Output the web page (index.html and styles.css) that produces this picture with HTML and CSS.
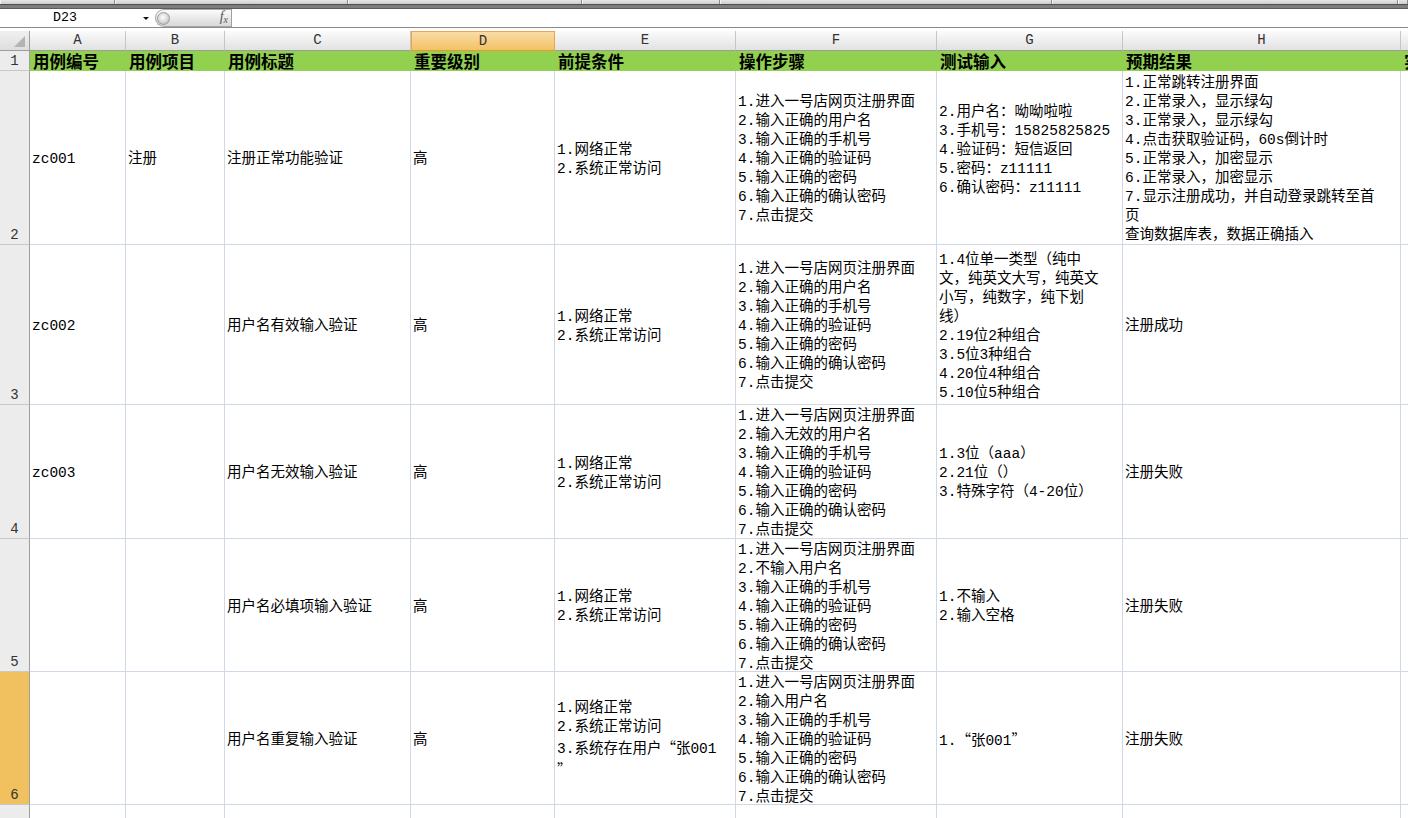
FILE: index.html
```html
<!DOCTYPE html>
<html lang="zh-CN">
<head>
<meta charset="utf-8">
<title>测试用例</title>
<link rel="stylesheet" href="styles.css">
</head>
<body>
<div class="tabs">
  <i class="tab w1"></i><i class="tab w2"></i><i class="tab w3"></i><i class="tab w4"></i><i class="tab w5"></i><i class="tab w6"></i><i class="tab w7"></i>
</div>
<div class="band"></div>
<div class="fbar">
  <div class="namebox"><span class="nm">D23</span><span class="dd"></span></div>
  <div class="pill"><span class="knob"></span><span class="fx">f<sub>x</sub></span></div>
  <div class="finput"></div>
</div>
<div class="gap"></div>

<div class="sheet">
  <!-- column headers -->
  <div class="corner"><span class="tri"></span></div>
  <div class="ch">A</div><div class="ch">B</div><div class="ch">C</div><div class="ch sel">D</div>
  <div class="ch">E</div><div class="ch">F</div><div class="ch">G</div><div class="ch">H</div><div class="ch">I</div>

  <!-- row 1 -->
  <div class="rh">1</div>
  <div class="h">用例编号</div><div class="h">用例项目</div><div class="h">用例标题</div><div class="h">重要级别</div>
  <div class="h">前提条件</div><div class="h">操作步骤</div><div class="h">测试输入</div><div class="h">预期结果</div><div class="h">实际结果</div>

  <!-- row 2 -->
  <div class="rh">2</div>
  <div class="c"><div>zc001</div></div>
  <div class="c"><div>注册</div></div>
  <div class="c"><div>注册正常功能验证</div></div>
  <div class="c"><div>高</div></div>
  <div class="c"><div>1.网络正常<br>2.系统正常访问</div></div>
  <div class="c"><div>1.进入一号店网页注册界面<br>2.输入正确的用户名<br>3.输入正确的手机号<br>4.输入正确的验证码<br>5.输入正确的密码<br>6.输入正确的确认密码<br>7.点击提交</div></div>
  <div class="c"><div>2.用户名：呦呦啦啦<br>3.手机号：15825825825<br>4.验证码：短信返回<br>5.密码：z11111<br>6.确认密码：z11111<br>&nbsp;</div></div>
  <div class="c"><div>1.正常跳转注册界面<br>2.正常录入，显示绿勾<br>3.正常录入，显示绿勾<br>4.点击获取验证码，60s倒计时<br>5.正常录入，加密显示<br>6.正常录入，加密显示<br>7.显示注册成功，并自动登录跳转至首<br>页<br>查询数据库表，数据正确插入</div></div>
  <div class="c"></div>

  <!-- row 3 -->
  <div class="rh">3</div>
  <div class="c"><div>zc002</div></div>
  <div class="c"></div>
  <div class="c"><div>用户名有效输入验证</div></div>
  <div class="c"><div>高</div></div>
  <div class="c"><div>1.网络正常<br>2.系统正常访问</div></div>
  <div class="c"><div>1.进入一号店网页注册界面<br>2.输入正确的用户名<br>3.输入正确的手机号<br>4.输入正确的验证码<br>5.输入正确的密码<br>6.输入正确的确认密码<br>7.点击提交</div></div>
  <div class="c"><div>1.4位单一类型（纯中<br>文，纯英文大写，纯英文<br>小写，纯数字，纯下划<br>线）<br>2.19位2种组合<br>3.5位3种组合<br>4.20位4种组合<br>5.10位5种组合</div></div>
  <div class="c"><div>注册成功</div></div>
  <div class="c"></div>

  <!-- row 4 -->
  <div class="rh">4</div>
  <div class="c"><div>zc003</div></div>
  <div class="c"></div>
  <div class="c"><div>用户名无效输入验证</div></div>
  <div class="c"><div>高</div></div>
  <div class="c"><div>1.网络正常<br>2.系统正常访问</div></div>
  <div class="c"><div>1.进入一号店网页注册界面<br>2.输入无效的用户名<br>3.输入正确的手机号<br>4.输入正确的验证码<br>5.输入正确的密码<br>6.输入正确的确认密码<br>7.点击提交</div></div>
  <div class="c"><div>1.3位（aaa）<br>2.21位（）<br>3.特殊字符（4-20位）</div></div>
  <div class="c"><div>注册失败</div></div>
  <div class="c"></div>

  <!-- row 5 -->
  <div class="rh">5</div>
  <div class="c"></div>
  <div class="c"></div>
  <div class="c"><div>用户名必填项输入验证</div></div>
  <div class="c"><div>高</div></div>
  <div class="c"><div>1.网络正常<br>2.系统正常访问</div></div>
  <div class="c"><div>1.进入一号店网页注册界面<br>2.不输入用户名<br>3.输入正确的手机号<br>4.输入正确的验证码<br>5.输入正确的密码<br>6.输入正确的确认密码<br>7.点击提交</div></div>
  <div class="c"><div>1.不输入<br>2.输入空格</div></div>
  <div class="c"><div>注册失败</div></div>
  <div class="c"></div>

  <!-- row 6 -->
  <div class="rh sel">6</div>
  <div class="c"></div>
  <div class="c"></div>
  <div class="c"><div>用户名重复输入验证</div></div>
  <div class="c"><div>高</div></div>
  <div class="c"><div>1.网络正常<br>2.系统正常访问<br>3.系统存在用户<span class="q">“</span>张001<br><span class="q">”</span></div></div>
  <div class="c"><div>1.进入一号店网页注册界面<br>2.输入用户名<br>3.输入正确的手机号<br>4.输入正确的验证码<br>5.输入正确的密码<br>6.输入正确的确认密码<br>7.点击提交</div></div>
  <div class="c"><div>1.<span class="q">“</span>张001<span class="q">”</span></div></div>
  <div class="c"><div>注册失败</div></div>
  <div class="c"></div>

  <!-- row 7 -->
  <div class="rh">7</div>
  <div class="c"></div><div class="c"></div><div class="c"></div><div class="c"></div>
  <div class="c"></div><div class="c"></div><div class="c"></div><div class="c"></div><div class="c"></div>
</div>
</body>
</html>
```
FILE: styles.css
```css
* { box-sizing: border-box; }

body {
  margin: 0;
  width: 1408px;
  height: 818px;
  overflow: hidden;
  background: #ffffff;
  font-family: "Liberation Mono", "Noto Sans CJK SC", monospace;
  color: #000;
}

/* top strip */
.tabs {
  display: flex;
  height: 4px;
  background: #9a9a9a;
}
.tab {
  display: block;
  height: 100%;
  background: linear-gradient(#e6e6e6, #cdcdcd);
  border-left: 1px solid #f4f4f4;
  border-right: 1px solid #8c8c8c;
}
.w1 { width: 115px; }
.w2 { width: 233px; }
.w3 { width: 234px; }
.w4 { width: 138px; }
.w5 { width: 332px; }
.w6 { width: 346px; }
.w7 { flex: 1; }

.band {
  height: 5px;
  background: #7d7d7d;
  border-top: 1px solid #4f4f4f;
  border-bottom: 1px solid #5c5c5c;
}

.fbar {
  display: flex;
  height: 19px;
  border-bottom: 1px solid #8b8b8b;
  background: #fff;
}
.namebox {
  width: 155px;
  display: flex;
  align-items: center;
}
.nm {
  width: 130px;
  text-align: center;
  font-family: "Liberation Mono", monospace;
  font-size: 13.3px;
  line-height: 18px;
}
.dd {
  margin-left: 13px;
  width: 0;
  height: 0;
  border-left: 3px solid transparent;
  border-right: 3px solid transparent;
  border-top: 3px solid #111;
}
.pill {
  width: 76px;
  height: 100%;
  border: 1px solid #a8a8a8;
  border-right: none;
  border-radius: 9px 0 0 9px;
  background: linear-gradient(#fbfbfb, #d8d8d8);
  display: flex;
  align-items: center;
  justify-content: space-between;
  padding: 0 3px 0 1px;
}
.knob {
  width: 13px;
  height: 13px;
  border-radius: 50%;
  border: 1px solid #9c9c9c;
  background: radial-gradient(circle at 45% 40%, #ffffff 0%, #d6d6d6 55%, #a2a2a2 100%);
}
.fx {
  font-family: "Liberation Serif", serif;
  font-style: italic;
  font-size: 14px;
  line-height: 14px;
  color: #555;
}
.fx sub {
  font-size: 10px;
  vertical-align: -2px;
}
.finput {
  flex: 1;
  border-left: 1px solid #9f9f9f;
}
.gap { height: 3px; }

/* sheet grid */
.sheet {
  display: grid;
  grid-template-columns: 30px 96px 99px 186px 144px 181px 201px 186px 278px 120px;
  grid-template-rows: 20px 20px 174px 160px 134px 133px 133px 30px;
  width: max-content;
}

.corner {
  background: linear-gradient(#f0f0f0, #dedede);
  border-right: 1px solid #9e9e9e;
  border-bottom: 1px solid #9c9c9c;
  display: flex;
  align-items: flex-end;
  justify-content: flex-end;
  padding: 0 4px 3px 0;
}
.tri {
  width: 11px;
  height: 11px;
  background: #b3b3b3;
  clip-path: polygon(100% 0, 100% 100%, 0 100%);
}

.ch {
  background: linear-gradient(#fbfbfb, #e2e2e2);
  border-right: 1px solid #c5c5c5;
  border-bottom: 1px solid #9c9c9c;
  text-align: center;
  font-family: "Liberation Mono", monospace;
  font-size: 14px;
  line-height: 19px;
  color: #333;
}
.ch.sel {
  background: linear-gradient(#f9dca7, #f2c164);
  border: 1px solid #f2a24c;
  border-bottom-color: #f29436;
}

.rh {
  background: #ececec;
  border-right: 1px solid #9e9e9e;
  border-bottom: 1px solid #c8c8c8;
  display: flex;
  align-items: flex-end;
  justify-content: center;
  font-family: "Liberation Mono", monospace;
  font-size: 14px;
  line-height: 18px;
  color: #333;
}
.rh.sel { background: #f1c15f; }

.h {
  background: #92d050;
  font-family: "Noto Sans CJK SC", sans-serif;
  font-weight: 700;
  font-size: 16.5px;
  line-height: 20px;
  padding-left: 3px;
  display: flex;
  align-items: center;
  white-space: nowrap;
}

.c {
  border-right: 1px solid #d0d7e5;
  border-bottom: 1px solid #d0d7e5;
  padding: 4px 0 0 2px;
  display: flex;
  align-items: center;
  font-size: 14.5px;
  line-height: 19px;
  white-space: nowrap;
  overflow: hidden;
}

.q { font-family: "Noto Sans CJK SC", sans-serif; }
```
